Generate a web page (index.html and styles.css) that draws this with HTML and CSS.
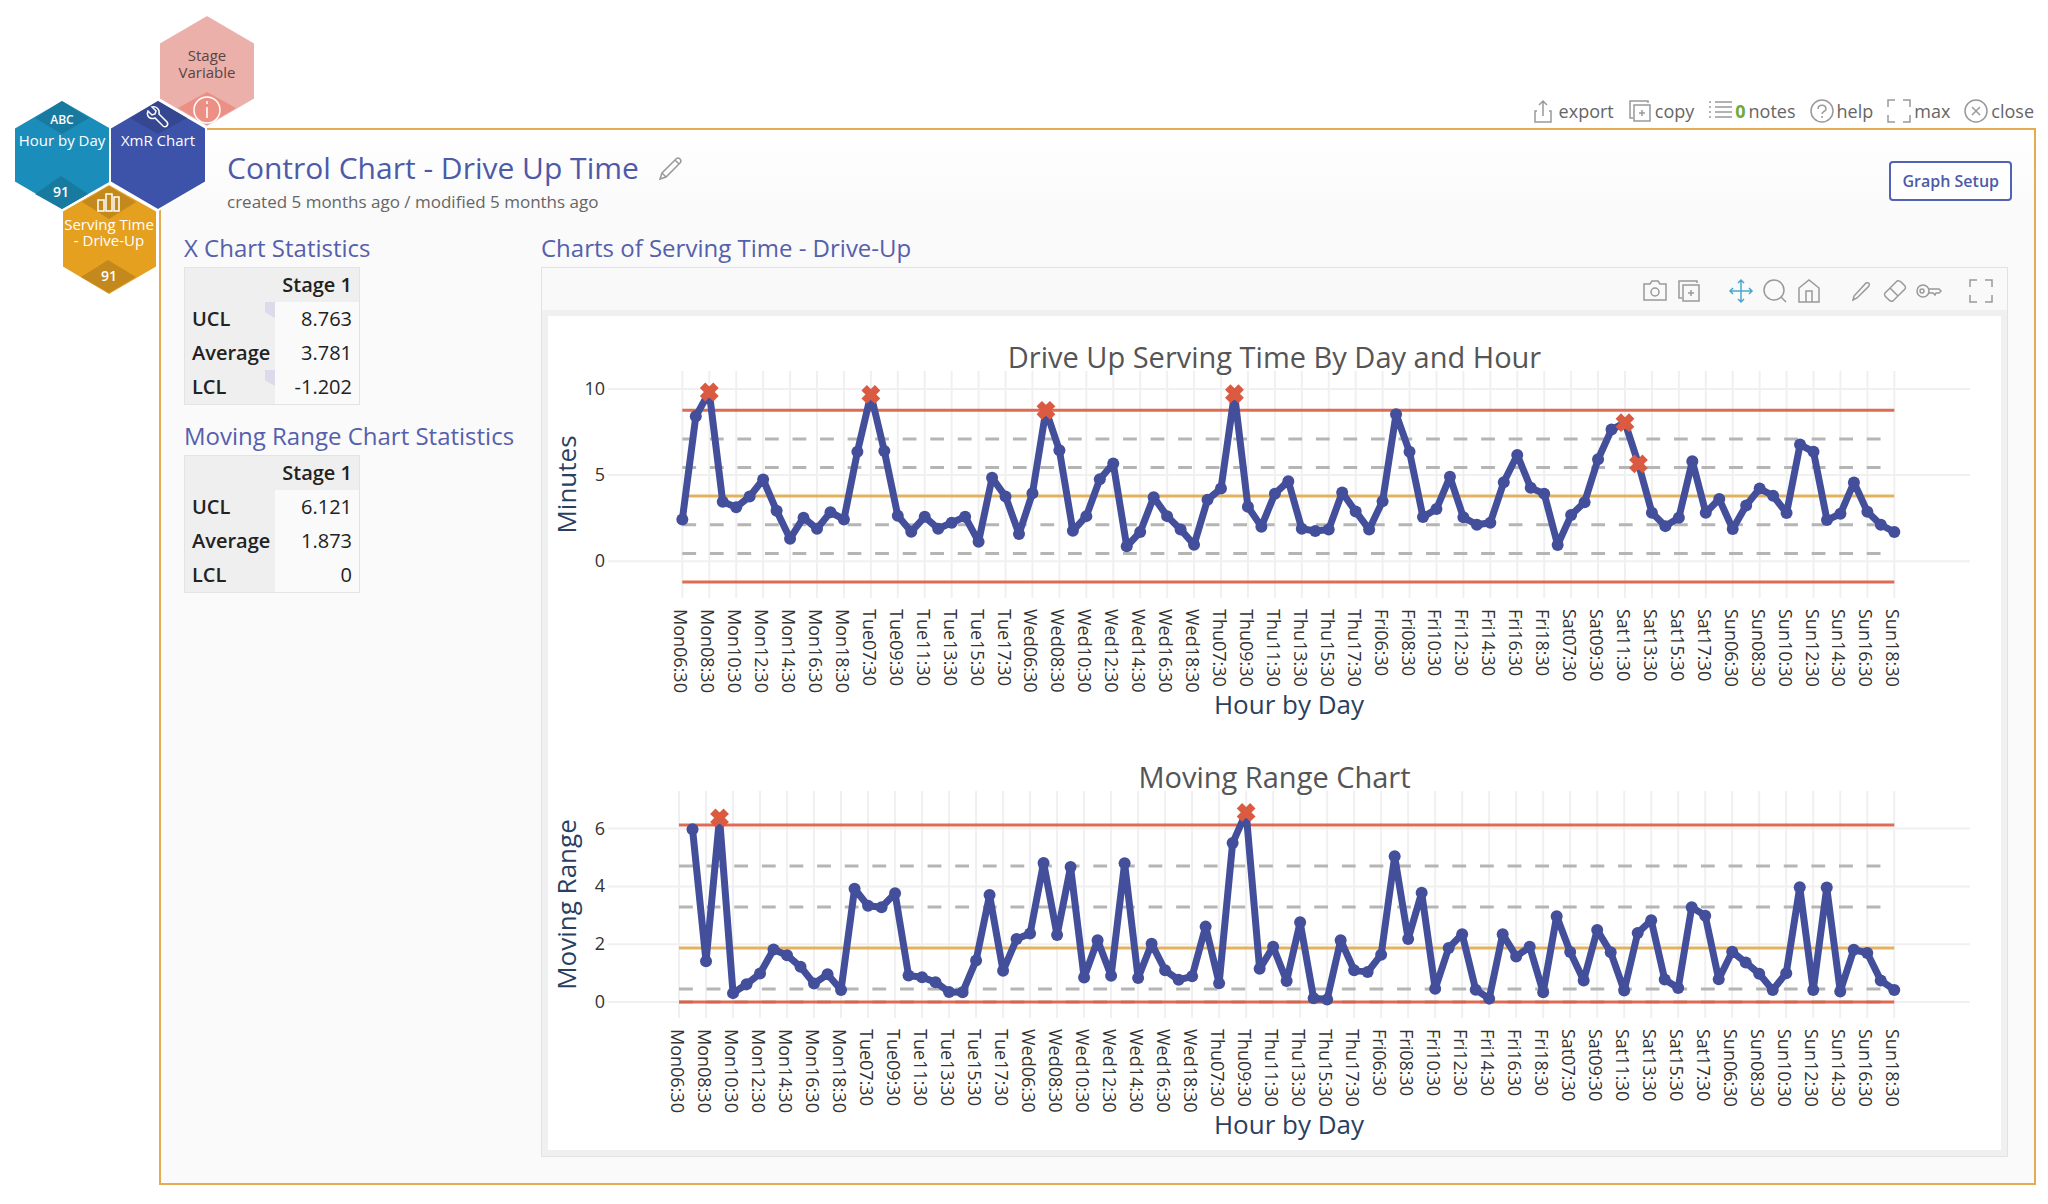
FILE: index.html
```
<!DOCTYPE html>
<html lang="en">
<head>
    <meta charset="utf-8">
    <meta name="viewport" content="width=device-width, initial-scale=1.0">
    <title>Control Chart - Drive Up Time</title>
    <link rel="stylesheet" href="styles.css">
</head>
<body>
    <!-- icons used more than once -->
    <svg class="icon-defs" aria-hidden="true">
        <symbol id="icon-copy" viewBox="0 0 24 24">
            <path d="M5 19H2V2h18v2M6 6h16v16H6z M14 11v6M11 14h6"/>
        </symbol>
        <symbol id="icon-max" viewBox="0 0 24 24">
            <path d="M1 8V1h7M16 1h7v7M23 16v7h-7M8 23H1v-7"/>
        </symbol>
    </svg>

    <div class="toolbar">
        <button class="tool"><svg class="icon" viewBox="0 0 24 24"><path d="M11 17V2M7 6l4-4 4 4M5 12H3v11h16V12h-2"/></svg>export</button>
        <button class="tool"><svg class="icon"><use href="#icon-copy"/></svg>copy</button>
        <button class="tool"><svg class="icon" viewBox="0 0 24 24"><path d="M1 3h2M7 3h17M1 8h2M7 8h17M1 13h2M7 13h17M1 18h2M7 18h17"/></svg><b class="count">0</b>notes</button>
        <button class="tool"><svg class="icon" viewBox="0 0 24 24"><circle cx="12" cy="12" r="11"/><path d="M8 10c0-5 8-5 8 0 0 3-4 2-4 5M12 17v2"/></svg>help</button>
        <button class="tool"><svg class="icon"><use href="#icon-max"/></svg>max</button>
        <button class="tool"><svg class="icon" viewBox="0 0 24 24"><circle cx="12" cy="12" r="11"/><path d="M8 8l8 8M16 8l-8 8"/></svg>close</button>
    </div>

    <!-- hexagons: variables in the analysis -->
    <svg class="hexagons" width="260" height="300" viewBox="0 0 260 300">
        <g class="hex hex-stage">
            <path class="shape" d="M207 15l48 28v56l-48 28-48-28V43z"/>
            <path class="corner" d="M207 92l29 16-29 17-29-17z"/>
            <text class="dark" x="207" y="61">Stage</text>
            <text class="dark" x="207" y="78">Variable</text>
            <circle class="line" cx="207" cy="110" r="13"/>
            <path class="line" d="M207 107v11M207 101v3"/>
        </g>
        <g class="hex hex-x">
            <path class="shape" d="M62 100l49 28v54l-49 28-48-28v-54z"/>
            <path class="corner" d="M62 101l27 17-27 16-27-16zM61 176l27 18-26 15-27-15z"/>
            <text class="small" x="62" y="124">ABC</text>
            <text x="62" y="146">Hour by Day</text>
            <text class="number" x="61" y="197">91</text>
        </g>
        <g class="hex hex-chart">
            <path class="shape" d="M158 100l48 28v54l-48 28-48-28v-54z"/>
            <path class="corner" d="M158 101l29 17-29 16-28-16z"/>
            <path class="line" d="M148 111c-2 5 2 9 7 7l8 8c3 2 6-1 4-4l-8-8c1-5-3-8-7-7l4 4-1 3-3 1z"/>
            <text x="158" y="146">XmR Chart</text>
        </g>
        <g class="hex hex-y">
            <path class="shape" d="M109 184l48 27v56l-48 28-47-28v-56z"/>
            <path class="corner" d="M109 186l27 16-27 17-27-17zM108 260l28 17-27 16-28-16z"/>
            <path class="line" d="M98 200h6v11h-6zM106 194h6v17h-6zM114 197h5v14h-5z"/>
            <text x="109" y="230">Serving Time</text>
            <text x="109" y="246">- Drive-Up</text>
            <text class="number" x="109" y="281">91</text>
        </g>
    </svg>

    <div class="panel">
        <div class="panel-header">
            <div>
                <h1>Control Chart - Drive Up Time
                    <button class="edit" aria-label="Edit title"><svg class="icon" viewBox="0 0 24 24"><path d="M1 23l2-6L17 3q2-2 4 0t0 4L7 21zM3 17l4 4M16 4l4 4"/></svg></button>
                </h1>
                <p class="dates">created 5 months ago / modified 5 months ago</p>
            </div>
            <button class="setup">Graph Setup</button>
        </div>

        <div class="columns">
            <div class="stats">
                <h2>X Chart Statistics</h2>
                <table>
                    <tr><td></td><th>Stage 1</th></tr>
                    <tr><th class="flag">UCL</th><td>8.763</td></tr>
                    <tr><th>Average</th><td>3.781</td></tr>
                    <tr><th class="flag">LCL</th><td>-1.202</td></tr>
                </table>
                <h2>Moving Range Chart Statistics</h2>
                <table>
                    <tr><td></td><th>Stage 1</th></tr>
                    <tr><th>UCL</th><td>6.121</td></tr>
                    <tr><th>Average</th><td>1.873</td></tr>
                    <tr><th>LCL</th><td>0</td></tr>
                </table>
            </div>

            <div class="charts">
                <h2>Charts of Serving Time - Drive-Up</h2>
                <div class="chart-box">
                    <div class="chart-tools">
                        <div class="tool-group">
                            <button aria-label="Save image"><svg class="icon" viewBox="0 0 24 24"><path d="M1 5h6l2-3h6l2 3h6v16H1z"/><circle cx="12" cy="13" r="4"/></svg></button>
                            <button aria-label="Copy"><svg class="icon"><use href="#icon-copy"/></svg></button>
                        </div>
                        <div class="tool-group">
                            <button class="active" aria-label="Pan"><svg class="icon" viewBox="0 0 24 24"><path d="M12 1v22M1 12h22M9 4l3-3 3 3M9 20l3 3 3-3M4 9l-3 3 3 3M20 9l3 3-3 3"/></svg></button>
                            <button aria-label="Zoom"><svg class="icon" viewBox="0 0 24 24"><circle cx="11" cy="11" r="10"/><path d="M18 18l5 5"/></svg></button>
                            <button aria-label="Reset"><svg class="icon" viewBox="0 0 24 24"><path d="M2 9l10-8 10 8v14H2zM9 23V12h6v11"/></svg></button>
                        </div>
                        <div class="tool-group">
                            <button aria-label="Draw"><svg class="icon" viewBox="0 0 24 24"><path d="M4 21l1-4L17 4c3-1 4 1 3 3L8 19z"/></svg></button>
                            <button aria-label="Erase"><svg class="icon" viewBox="0 0 24 24"><path d="M2 14L14 2q2-1 4 1l4 4q1 2 0 3L10 22q-2 1-4-1l-4-4q-1-2 0-3zM7 9l8 8"/></svg></button>
                            <button aria-label="Annotate"><svg class="icon" viewBox="0 0 24 24"><circle cx="6" cy="12" r="6"/><circle cx="5" cy="12" r="2"/><path d="M12 10h10l2 2-2 2h-3l-1 2-2-2h-4"/></svg></button>
                        </div>
                        <div class="tool-group">
                            <button aria-label="Full screen"><svg class="icon"><use href="#icon-max"/></svg></button>
                        </div>
                    </div>
                    <div class="chart-body">
                        <svg class="chart" id="x-chart"></svg>
                        <svg class="chart" id="mr-chart"></svg>
                    </div>
                </div>
            </div>
        </div>
    </div>

    <script src="chart.js"></script>
</body>
</html>
```
FILE: styles.css
```
* {
    box-sizing: border-box;
}

body {
    margin: 0;
    background-color: #ffffff;
    color: #222222;
    font-family: "Open Sans", sans-serif;
}

button {
    margin: 0;
    padding: 0;
    border: none;
    background: none;
    color: #666666;
    font-family: inherit;
    cursor: pointer;
}

.icon {
    width: 24px;
    height: 24px;
    flex: none;
    fill: none;
    stroke: #999999;
    stroke-width: 1.5;
    overflow: visible;
}

.icon-defs {
    position: absolute;
    width: 0;
    height: 0;
}

.toolbar {
    display: flex;
    justify-content: flex-end;
    gap: 14px;
    padding: 99px 14px 5px 0;
}

.tool {
    display: flex;
    align-items: center;
    gap: 3px;
    font-size: 18px;
    line-height: 24px;
}

.count {
    color: #6fa83c;
}

/* hexagons hang over the corner of the panel */
.hexagons {
    position: absolute;
    left: 0;
    top: 0;
}

.hex .shape {
    stroke: #ffffff;
    stroke-width: 2;
}

.hex .line {
    fill: none;
    stroke: #ffffff;
    stroke-width: 1.5;
}

.hex text {
    fill: #ffffff;
    font-size: 15px;
    text-anchor: middle;
}

.hex .small {
    font-size: 12px;
    font-weight: 600;
}

.hex .number {
    font-size: 14px;
    font-weight: 600;
}

.hex .dark {
    fill: #5a4442;
}

.hex-stage .shape { fill: #ebb0a9; }
.hex-stage .corner { fill: #ec8f84; }
.hex-x .shape { fill: #1b8dba; }
.hex-x .corner { fill: #187a9f; }
.hex-chart .shape { fill: #3d52a9; }
.hex-chart .corner { fill: #354791; }
.hex-y .shape { fill: #e5a01f; }
.hex-y .corner { fill: #c3891c; }

.panel {
    margin: 0 12px 19px 159px;
    padding: 18px 26px 26px 23px;
    border: 2px solid #e3ac4f;
    background: linear-gradient(#ffffff, #fafafa 80px);
}

.panel-header {
    display: flex;
    justify-content: space-between;
    align-items: center;
    padding-left: 43px;
    margin: 0 -4px 18px 0;
}

h1 {
    display: flex;
    align-items: center;
    gap: 20px;
    margin: 0;
    color: #4d5aa8;
    font-size: 30px;
    font-weight: 400;
    line-height: 40px;
}

.edit {
    display: flex;
}

.dates {
    margin: 2px 0 0;
    color: #666666;
    font-size: 17px;
    line-height: 24px;
}

.setup {
    padding: 0 11px;
    border: 2px solid #5262b4;
    border-radius: 4px;
    background-color: #ffffff;
    color: #4d5aa8;
    font-size: 16px;
    font-weight: 600;
    line-height: 36px;
}

.columns {
    display: grid;
    grid-template-columns: 333px 1fr;
    gap: 24px;
}

h2 {
    margin: 0 0 3px;
    color: #5560ad;
    font-size: 24px;
    font-weight: 400;
    line-height: 32px;
    white-space: nowrap;
}

table {
    width: 176px;
    margin-bottom: 15px;
    border: 1px solid #e3e3e3;
    border-spacing: 0;
    font-size: 20px;
    line-height: 34px;
}

th,
td {
    padding: 0 7px;
    text-align: right;
}

th {
    font-weight: 600;
}

tr:first-child > *,
tr > :first-child {
    background-color: #efefef;
}

tr > :first-child {
    width: 90px;
    padding-right: 4px;
    text-align: left;
}

.flag {
    position: relative;
}

.flag::after {
    content: "";
    position: absolute;
    top: 0;
    right: 0;
    width: 10px;
    height: 16px;
    background-color: #dcdaeb;
    clip-path: polygon(0 0, 100% 0, 100% 100%, 0 65%);
}

.charts {
    min-width: 0;
}

.chart-box {
    border: 1px solid #e2e2e2;
}

.chart-tools {
    display: flex;
    justify-content: flex-end;
    gap: 28px;
    padding: 11px 14px 7px 0;
    background-color: #f9f9f9;
}

.tool-group {
    display: flex;
    gap: 10px;
}

.tool-group button {
    display: flex;
}

.active .icon {
    stroke: #4aa7cf;
}

.chart-body {
    display: grid;
    gap: 6px;
    border: 6px solid #f0f0f0;
    background-color: #ffffff;
}

.chart {
    display: block;
    width: 100%;
    height: 414px;
    overflow: visible;
}

.chart text {
    fill: #333333;
    font-size: 18px;
}

.chart .title {
    fill: #555555;
    font-size: 29px;
    text-anchor: middle;
}

.chart .axis-title {
    fill: #2a3f5f;
    font-size: 26px;
    text-anchor: middle;
}

.chart .y-tick {
    text-anchor: end;
}

.grid {
    stroke: #f0f0f0;
    stroke-width: 2;
}

.zone {
    stroke: #b5b5b5;
    stroke-width: 3;
}

.limit {
    stroke: #da5b41;
    stroke-opacity: 0.9;
    stroke-width: 3;
}

.average {
    stroke: #e3b25e;
    stroke-width: 3;
}

.series {
    fill: none;
    stroke: #434f9b;
    stroke-width: 7;
    stroke-linejoin: round;
}

.point {
    fill: #434f9b;
}

.signal {
    fill: #da5b41;
    stroke: #da5b41;
    stroke-width: 2;
}
```
FILE: chart.js
```
var days = ['Mon', 'Tue', 'Wed', 'Thu', 'Fri', 'Sat', 'Sun'];

// one value per hour, 06:30 to 18:30, one row per day
var times = [
    2.43, 8.41, 9.82, 3.45, 3.14, 3.76, 4.75, 2.93, 1.31, 2.53, 1.89, 2.85, 2.43,
    6.35, 9.68, 6.40, 2.64, 1.72, 2.58, 1.89, 2.24, 2.58, 1.14, 4.84, 3.76, 1.58,
    3.95, 8.76, 6.44, 1.77, 2.62, 4.76, 5.67, 0.87, 1.70, 3.72, 2.62, 1.85, 0.96,
    3.57, 4.22, 9.72, 3.16, 2.01, 3.92, 4.65, 1.89, 1.76, 1.85, 3.99, 2.89, 1.85,
    3.49, 8.53, 6.35, 2.57, 3.03, 4.90, 2.55, 2.12, 2.24, 4.59, 6.17, 4.26, 3.92,
    0.95, 2.68, 3.43, 5.92, 7.64, 8.04, 5.65, 2.82, 2.04, 2.53, 5.81, 2.82, 3.61,
    1.87, 3.24, 4.22, 3.80, 2.80, 6.77, 6.35, 2.39, 2.76, 4.57, 2.87, 2.12, 1.70
];

var ranges = times.map(function(value, i) {
    return i === 0 ? null : Math.abs(value - times[i - 1]);
});

var charts = [
    {
        id: 'x-chart',
        title: 'Drive Up Serving Time By Day and Hour',
        yTitle: 'Minutes',
        values: times,
        xRange: [-5.52, 95.62],
        yRange: [-2.13, 11.04],
        yTicks: [0, 5, 10],
        limits: [8.763, -1.202],
        average: 3.781,
        zones: [7.102, 5.441, 2.12, 0.459],
        signals: [2, 14, 27, 41, 70, 71]
    },
    {
        id: 'mr-chart',
        title: 'Moving Range Chart',
        yTitle: 'Moving Range',
        values: ranges,
        xRange: [-5.26, 95.61],
        yRange: [-0.55, 7.3],
        yTicks: [0, 2, 4, 6],
        limits: [6.121, 0],
        average: 1.873,
        zones: [4.705, 3.289, 0.457, 0],
        signals: [3, 42]
    }
];

function add(svg, name, attributes, text) {
    var element = document.createElementNS('http://www.w3.org/2000/svg', name);
    for (var key in attributes) {
        element.setAttribute(key, attributes[key]);
    }
    if (text !== undefined) {
        element.textContent = text;
    }
    svg.appendChild(element);
}

function timeLabel(i) {
    var hour = 6 + i % 13;
    return days[Math.floor(i / 13)] + (hour < 10 ? '0' : '') + hour + ':30';
}

function drawChart(chart) {
    var svg = document.getElementById(chart.id);
    var width = svg.getBoundingClientRect().width;
    var left = 60, right = width - 31, top = 55, bottom = 282;
    var last = chart.values.length - 1;

    svg.innerHTML = '';

    function x(i) {
        return left + (i - chart.xRange[0]) / (chart.xRange[1] - chart.xRange[0]) * (right - left);
    }

    function y(value) {
        return bottom - (value - chart.yRange[0]) / (chart.yRange[1] - chart.yRange[0]) * (bottom - top);
    }

    function level(value, className, dash) {
        add(svg, 'line', {'class': className, x1: x(0), x2: x(last), y1: y(value), y2: y(value), 'stroke-dasharray': dash || 'none'});
    }

    // grid and tick labels
    for (var i = 0; i <= last; i += 2) {
        add(svg, 'line', {'class': 'grid', x1: x(i), x2: x(i), y1: top, y2: bottom});
        add(svg, 'text', {transform: 'translate(' + (x(i) - 8) + ' ' + (bottom + 11) + ') rotate(90)'}, timeLabel(i));
    }
    chart.yTicks.forEach(function(tick) {
        add(svg, 'line', {'class': 'grid', x1: left, x2: right, y1: y(tick), y2: y(tick)});
        add(svg, 'text', {'class': 'y-tick', x: left - 3, y: y(tick) + 6}, tick);
    });

    // control limits
    chart.zones.forEach(function(value) {
        level(value, 'zone', (x(last) - x(0)) / 88);
    });
    level(chart.average, 'average');
    chart.limits.forEach(function(value) {
        level(value, 'limit');
    });

    // data
    var points = [];
    chart.values.forEach(function(value, i) {
        if (value !== null) {
            points.push(x(i) + ',' + y(value));
        }
    });
    add(svg, 'polyline', {'class': 'series', points: points.join(' ')});
    chart.values.forEach(function(value, i) {
        if (value === null) {
            return;
        }
        if (chart.signals.indexOf(i) >= 0) {
            add(svg, 'path', {'class': 'signal', transform: 'translate(' + x(i) + ' ' + y(value) + ')', d: 'M0 4l4 4 4-4-4-4 4-4-4-4-4 4-4-4-4 4 4 4-4 4 4 4z'});
        } else {
            add(svg, 'circle', {'class': 'point', cx: x(i), cy: y(value), r: 6});
        }
    });

    // titles
    add(svg, 'text', {'class': 'title', x: width / 2, y: 52}, chart.title);
    add(svg, 'text', {'class': 'axis-title', x: (left + right) / 2, y: 398}, 'Hour by Day');
    add(svg, 'text', {'class': 'axis-title', transform: 'translate(28 ' + (top + bottom) / 2 + ') rotate(-90)'}, chart.yTitle);
}

function drawAll() {
    charts.forEach(drawChart);
}

window.addEventListener('resize', drawAll);
drawAll();
```
